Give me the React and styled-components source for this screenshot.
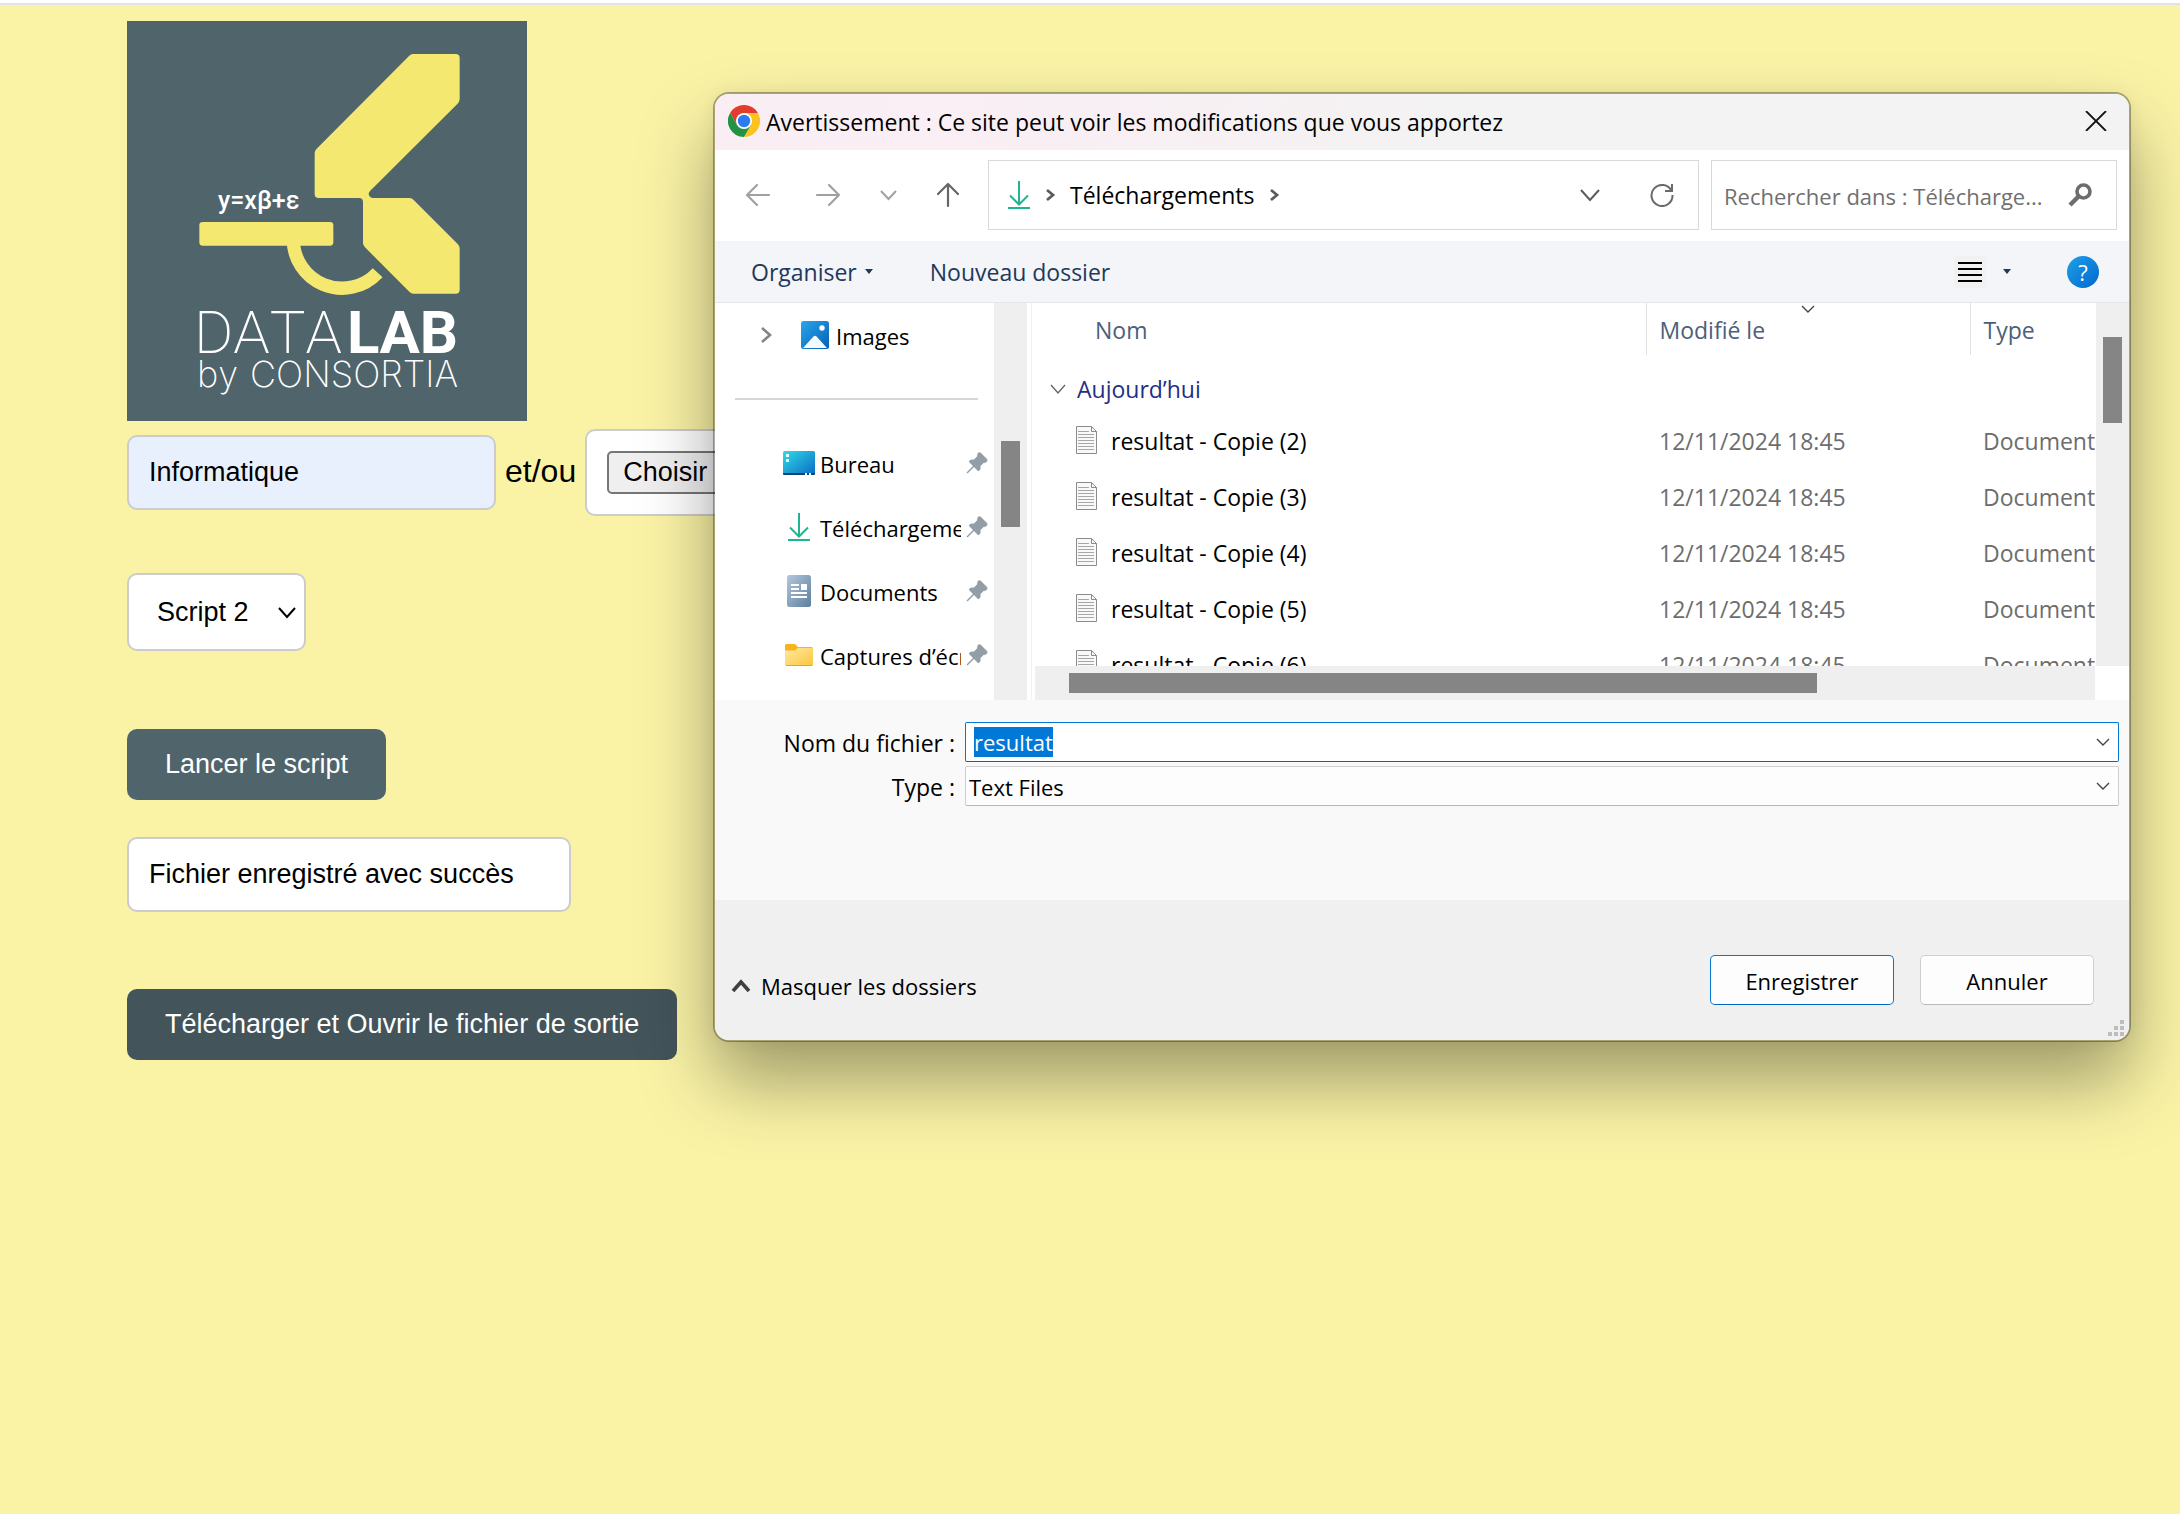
import React, { useEffect, useRef } from "react";
import styled, { createGlobalStyle, css } from "styled-components";

const GlobalStyle = createGlobalStyle`
  *, *::before, *::after { box-sizing: border-box; }
  body {
    margin: 0;
    background: #faf3a6;
    font-family: "Liberation Sans", Arial, sans-serif;
    color: #000;
  }
  button, input, select { font: inherit; color: inherit; margin: 0; }
`;

/* ---------- web page ---------- */

const Page = styled.div`
  position: relative;
  min-height: 100vh;
  border-top: 3px solid #fff;
`;

const PageForm = styled.main`
  display: flex;
  flex-direction: column;
  align-items: flex-start;
  padding: 16px 127px;
  border-top: 2px solid #e2e2e2;
  font-size: 27px;
`;

const Logo = styled.svg`
  display: block;
  width: 400px;
  height: 400px;
  background: #50646c;
`;

const SourceRow = styled.div`
  display: flex;
  align-items: center;
  gap: 9px;
  margin-top: 8px;
`;

const boxed = css`
  border: 2px solid #ccc;
  border-radius: 10px;
  background: #fff;
`;

const TextField = styled.input`
  ${boxed}
  width: ${(p) => p.$width}px;
  height: 75px;
  padding: 0 20px;
  background: ${(p) => (p.$filled ? "#e8f0fe" : "#fff")};
`;

const Joiner = styled.span`
  font-size: 32px;
  line-height: 36px;
  padding-bottom: 4px;
`;

const FileBox = styled.label`
  ${boxed}
  display: flex;
  align-items: center;
  width: 600px;
  height: 87px;
  padding: 0 20px;
`;

const HiddenFile = styled.input`
  width: 0;
  height: 0;
  opacity: 0;
  padding: 0;
  border: 0;
`;

const FileTrigger = styled.span`
  height: 43px;
  padding: 0 14px;
  border: 2px solid #767676;
  border-radius: 5px;
  background: #efefef;
  line-height: 39px;
`;

const ScriptPicker = styled.div`
  ${boxed}
  display: grid;
  align-items: center;
  width: 179px;
  height: 78px;
  margin-top: 57px;
  > * { grid-area: 1 / 1; }
  > svg { justify-self: end; margin-right: 8px; pointer-events: none; }
`;

const ScriptSelect = styled.select`
  appearance: none;
  width: 100%;
  height: 100%;
  padding: 0 28px;
  border: 0;
  background: transparent;
`;

const ActionButton = styled.button`
  height: 71px;
  margin-top: ${(p) => p.$gap}px;
  padding: 0 38px;
  border: 0;
  border-radius: 10px;
  background: ${(p) => (p.$pressed ? "#43545a" : "#50646c")};
  color: #fff;
`;

const Output = styled(TextField)`
  margin-top: 37px;
`;

/* ---------- save dialog ---------- */

const Dialog = styled.section`
  position: absolute;
  top: 89px;
  left: 713px;
  right: 49px;
  border: 2px solid rgba(0, 0, 0, 0.32);
  border-radius: 16px;
  background: #fff;
  background-clip: padding-box;
  box-shadow: 0 40px 72px rgba(0, 0, 0, 0.36), 0 0 16px rgba(0, 0, 0, 0.06);
  font-family: "Open Sans", "Noto Sans", sans-serif;
  font-size: 23px;
  line-height: 30px;
`;

const PlainButton = styled.button`
  display: flex;
  align-items: center;
  justify-content: center;
  padding: 0;
  border: 0;
  background: transparent;
`;

const TitleBar = styled.header`
  display: flex;
  align-items: center;
  gap: 6px;
  height: 56px;
  padding: 0 22px 2px 13px;
  border-radius: 14px 14px 0 0;
  background: linear-gradient(100deg, #faeef4 0%, #f8eff4 25%, #f3f3f3 55%);
`;

const Title = styled.h1`
  flex: 1;
  margin: 0;
  padding-top: 2px;
  font-size: 23px;
  font-weight: 400;
`;

const NavRow = styled.div`
  display: flex;
  align-items: center;
  height: 91px;
  padding: 0 12px 2px 13px;
`;

const NavButtons = styled.nav`
  display: flex;
  gap: 20px;
  margin-right: 20px;
`;

const NavButton = styled(PlainButton)`
  width: ${(p) => (p.$wide ? 60 : 40)}px;
  height: 40px;
  color: ${(p) => (p.$active ? "#666" : "#a0a0a0")};
`;

const fieldBox = css`
  display: flex;
  align-items: center;
  height: 70px;
  border: 1px solid #d9d9d9;
  background: #fff;
`;

const Address = styled.div`
  ${fieldBox}
  flex: 1;
  padding: 0 24px 0 19px;
`;

const Crumbs = styled.div`
  display: flex;
  flex: 1;
  align-items: center;
  gap: 16px;
`;

const AddressTools = styled.div`
  display: flex;
  gap: 50px;
`;

const Search = styled.label`
  ${fieldBox}
  width: 406px;
  margin-left: 12px;
  padding: 0 24px 0 12px;
`;

const SearchInput = styled.input`
  flex: 1;
  min-width: 0;
  padding: 2px 0 0;
  border: 0;
  outline: 0;
  background: transparent;
  font-size: 22px;
  &::placeholder { color: #707070; opacity: 1; }
`;

const CommandBar = styled.div`
  display: flex;
  align-items: center;
  height: 62px;
  padding: 0 30px 0 36px;
  border-bottom: 1px solid #e4e6e9;
  background: #f4f5f8;
`;

const Command = styled(PlainButton)`
  gap: 8px;
  margin-right: 57px;
  color: #1e395b;
`;

const CommandTools = styled.div`
  display: flex;
  align-items: center;
  margin-left: auto;
`;

const ViewButton = styled(PlainButton)`
  gap: 17px;
  margin-right: 56px;
`;

const Help = styled(PlainButton)`
  width: 32px;
  height: 32px;
  border-radius: 50%;
  background: linear-gradient(135deg, #1fa0e6, #0067d0);
  color: #fff;
  font-size: 22px;
  line-height: 32px;
`;

const Body = styled.div`
  display: flex;
  height: 397px;
`;

const Sidebar = styled.div`
  display: flex;
  width: 317px;
  padding-right: 4px;
  border-right: 1px solid #f2f2f2;
`;

const Places = styled.ul`
  flex: 1;
  min-width: 0;
  margin: 0;
  padding: 0 0 0 20px;
  list-style: none;
  font-size: 22px;
`;

const Place = styled.li`
  display: flex;
  align-items: center;
  height: 64px;
  padding: 0 6px 0 ${(p) => (p.$root ? 26 : 48)}px;
`;

const PlaceIcon = styled.span`
  display: flex;
  flex: none;
  justify-content: center;
  width: 32px;
  margin-right: 5px;
`;

const PlaceName = styled.a`
  flex: 1;
  overflow: hidden;
  padding-top: 2px;
  margin-right: 5px;
  color: inherit;
  text-decoration: none;
  white-space: nowrap;
`;

const Expander = styled(PlainButton)`
  width: 10px;
  margin-right: 28px;
`;

const Divider = styled.hr`
  height: 2px;
  margin: 31px 16px 31px 0;
  border: 0;
  background: #d6d6d6;
`;

const VerticalBar = styled.div`
  width: 33px;
  padding: ${(p) => p.$offset}px 7px 0;
  background: #efefef;
  &::before {
    content: "";
    display: block;
    height: 86px;
    background: #858585;
  }
`;

const Files = styled.div`
  display: flex;
  flex: 1;
  flex-direction: column;
  min-width: 0;
`;

const FilesTop = styled.div`
  display: flex;
  height: 363px;
`;

const TableClip = styled.div`
  flex: 1;
  min-width: 0;
  overflow: hidden;
`;

const FileTable = styled.table`
  width: 100%;
  table-layout: fixed;
  border-collapse: collapse;
  white-space: nowrap;
`;

const ColumnHead = styled.th`
  width: ${(p) => p.$width};
  height: 52px;
  padding: 0 0 0 ${(p) => p.$inset}px;
  border-right: ${(p) => (p.$last ? "0" : "1px solid #e2e2e2")};
  color: #4c607a;
  font-weight: 400;
  text-align: left;
  vertical-align: top;
`;

const HeadLabel = styled.div`
  padding-top: ${(p) => (p.$sorted ? 3 : 12)}px;
`;

const SortMark = styled.div`
  display: flex;
  justify-content: center;
  height: 9px;
  padding: 2px 13px 0 0;
`;

const GroupCell = styled.th`
  height: 57px;
  padding: 11px 0 0 18px;
  color: #1f2f87;
  font-weight: 400;
  text-align: left;
`;

const Inline = styled.div`
  display: flex;
  align-items: center;
  gap: ${(p) => p.$gap}px;
`;

const FileCell = styled.td`
  height: 56px;
  padding: ${(p) => (p.$name ? "0 0 0 44px" : "1px 0 0 13px")};
  overflow: hidden;
  color: ${(p) => (p.$name ? "#000" : "#6d6d6d")};
`;

const FileName = styled.span`
  padding-top: 1px;
`;

const HorizontalBar = styled.div`
  height: 34px;
  margin: 0 34px 0 3px;
  padding: 7px 278px 7px 34px;
  background: #efefef;
  &::before {
    content: "";
    display: block;
    height: 20px;
    background: #858585;
  }
`;

const SaveFields = styled.div`
  display: grid;
  grid-template-columns: 240px 1fr;
  grid-auto-rows: 40px;
  gap: 4px 10px;
  height: 200px;
  padding: 22px 10px 0 0;
  background: #f9f9f9;
`;

const FieldLabel = styled.label`
  padding-top: 6px;
  text-align: right;
`;

const Combo = styled.div`
  display: grid;
  align-items: center;
  border: 1px solid ${(p) => (p.$focused ? "#0078d4" : "#cfcfcf")};
  border-bottom-color: ${(p) => (p.$focused ? "#0067c0" : "#b8b8b8")};
  border-radius: 2px;
  background: ${(p) => (p.$focused ? "#fff" : "#fdfdfd")};
  font-size: 22px;
  > * { grid-area: 1 / 1; }
  > svg { justify-self: end; margin-right: 8px; pointer-events: none; }
`;

const comboControl = css`
  width: 100%;
  height: 36px;
  border: 0;
  outline: 0;
  background: transparent;
`;

const NameInput = styled.input`
  ${comboControl}
  padding: 0 30px 0 8px;
  &::selection { background: #0078d7; color: #fff; }
`;

const TypeSelect = styled.select`
  ${comboControl}
  appearance: none;
  padding: 2px 30px 0 3px;
`;

const Footer = styled.footer`
  display: flex;
  flex-direction: column;
  height: 140px;
  padding: 55px 5px 4px 17px;
  border-radius: 0 0 14px 14px;
  background: #f0f0f0;
`;

const FooterRow = styled.div`
  display: flex;
  align-items: center;
  gap: 26px;
  padding-right: 30px;
  font-size: 22px;
`;

const HideFolders = styled(PlainButton)`
  gap: 11px;
  margin-right: auto;
  padding-top: 12px;
`;

const DialogButton = styled.button`
  width: ${(p) => (p.$primary ? 184 : 174)}px;
  height: 50px;
  padding: 2px 0 0;
  border: 1px solid ${(p) => (p.$primary ? "#0078d4" : "#d0d0d0")};
  border-bottom-color: ${(p) => (p.$primary ? "#0067c0" : "#b8b8b8")};
  border-radius: 5px;
  background: #fdfdfd;
`;

const Grip = styled.svg`
  align-self: flex-end;
  margin-top: 15px;
`;

/* ---------- drawings ---------- */

const Chevron = ({ w = 14, h = 8, color = "#444", stroke = 1.4, dir = "down" }) => {
  const d = {
    down: `M1 1 L${w / 2} ${h - 1} L${w - 1} 1`,
    up: `M1 ${h - 1} L${w / 2} 1 L${w - 1} ${h - 1}`,
    right: `M1 1 L${w - 1} ${h / 2} L1 ${h - 1}`,
  }[dir];
  return (
    <svg width={w} height={h} viewBox={`0 0 ${w} ${h}`} fill="none" stroke={color} strokeWidth={stroke} overflow="visible" aria-hidden="true">
      <path d={d} />
    </svg>
  );
};

const Caret = () => (
  <svg width="8" height="5" viewBox="0 0 8 5" aria-hidden="true">
    <path d="M0 0H8L4 5Z" fill="#1e395b" />
  </svg>
);

const Arrow = ({ turn = 0 }) => (
  <svg width="26" height="26" viewBox="0 0 26 26" fill="none" stroke="currentColor" strokeWidth="2.2" strokeLinecap="round" strokeLinejoin="round" aria-hidden="true">
    <g transform={`rotate(${turn} 13 13)`}>
      <path d="M24 13H2M12 3L2 13L12 23" />
    </g>
  </svg>
);

const DownloadMark = () => (
  <svg width="22" height="28" viewBox="0 0 22 28" fill="none" stroke="#1fb592" strokeWidth="2" aria-hidden="true">
    <path d="M11 0V23M2 14.5L11 23.5L20 14.5M0 27H22" />
  </svg>
);

const DatalabLogo = () => (
  <Logo viewBox="0 0 400 400" role="img" aria-label="Datalab by Consortia">
    <g transform="scale(0.33333) translate(-51 -63)" fill="#f4e871">
      <path d="M909 162H1037Q1049 162 1049 174V298Q1049 305 1042 312L780 573Q772 583 780 590Q784 594 790 594H899Q905 594 911 600L1043 732Q1049 738 1049 745V869Q1049 881 1037 881H910Q904 881 898 875L765 742Q759 736 759 730V606Q759 594 747 594H626Q614 594 614 582V460Q614 452 620 446L897 168Q903 162 909 162Z" />
      <rect x="268" y="666" width="402" height="71" rx="10" />
      <path d="M550 725Q550 720 550 715A146 146 0 0 0 803 818" fill="none" stroke="#f4e871" strokeWidth="40" />
    </g>
    <g fill="#fff" fontFamily="Roboto, sans-serif" style={{ fontKerning: "none" }}>
      <text x="91" y="188" fontSize="25" fontWeight="500">y=xβ+ε</text>
      <text x="67" y="332" fontSize="60" fontWeight="200">DATA</text>
      <text x="220" y="332" fontSize="60" fontWeight="700">LAB</text>
      <g fontFamily="Inter, sans-serif" fontSize="36" fontWeight="200">
        <text x="70" y="366">by</text>
        <text x="123" y="366">CONSORTIA</text>
      </g>
    </g>
  </Logo>
);

const ChromeMark = () => (
  <svg width="32" height="32" viewBox="0 0 48 48" aria-hidden="true">
    <path d="M24 12H44.8A24 24 0 0 0 3.2 12L13.6 30Z" fill="#e33b2e" />
    <path d="M34.4 30L24 48A24 24 0 0 0 44.8 12H24Z" fill="#fcc31e" />
    <path d="M13.6 30L3.2 12A24 24 0 0 0 24 48L34.4 30Z" fill="#229342" />
    <circle cx="24" cy="24" r="12" fill="#fff" />
    <circle cx="24" cy="24" r="9.3" fill="#2b7cf0" />
  </svg>
);

const RefreshMark = () => (
  <svg width="24" height="24" viewBox="0 0 24 24" fill="none" stroke="#6a6a6a" strokeWidth="2" aria-hidden="true">
    <path d="M21.5 8A10.5 10.5 0 1 0 22.5 12M22 1V8H15" />
  </svg>
);

const SearchMark = () => (
  <svg width="24" height="24" viewBox="0 0 24 24" fill="none" stroke="#6d6d6d" aria-hidden="true">
    <circle cx="15.5" cy="8.5" r="6.5" strokeWidth="3.6" />
    <path d="M10.5 13.5L2 22" strokeWidth="4.4" />
  </svg>
);

const ListMark = () => (
  <svg width="32" height="32" viewBox="0 0 32 32" aria-hidden="true">
    <rect width="32" height="32" rx="3" fill="#f1f1f1" />
    <path d="M4 7H28M4 13H28M4 19H28M4 25H28" stroke="#000" strokeWidth="2" />
  </svg>
);

const PinMark = () => (
  <svg width="22" height="22" viewBox="0 0 22 22" fill="#929da5" aria-hidden="true">
    <path d="M12.5 0.5Q14 0 15 1L21 7Q22 8 21 9.5Q20 11 17.5 11L14.5 14Q15 17 13.5 18.5Q12.5 19.5 11.5 18.5L8 15L1.5 21.5L0.5 20.5L7 14L3.5 10.5Q2.5 9.5 3.5 8.5Q5 7 8 7.5L11 4.5Q11 1.5 12.5 0.5Z" />
  </svg>
);

const ImagesMark = () => (
  <svg width="28" height="28" viewBox="0 0 28 28" aria-hidden="true">
    <defs>
      <linearGradient id="images" x2="1" y2="1">
        <stop stopColor="#2aa6ec" />
        <stop offset="1" stopColor="#0560b5" />
      </linearGradient>
    </defs>
    <rect width="28" height="28" rx="2.5" fill="url(#images)" />
    <path d="M2 27L12.5 15.5Q14 14 15.5 15.5L26 27Z" fill="#f4f9fe" />
    <circle cx="21" cy="7" r="2.7" fill="#fff" />
  </svg>
);

const DesktopMark = () => (
  <svg width="32" height="24" viewBox="0 0 32 24" aria-hidden="true">
    <defs>
      <linearGradient id="desktop" x2="1" y2="1">
        <stop stopColor="#31dbe4" />
        <stop offset="1" stopColor="#0a6ac6" />
      </linearGradient>
    </defs>
    <rect width="32" height="24" rx="1.5" fill="url(#desktop)" />
    <path d="M0 22H32V22.5Q32 24 30.5 24H1.5Q0 24 0 22.5Z" fill="#0b4570" />
    <path d="M3 3H6V6H3ZM3 8H6V11H3ZM22 22H24V24H22ZM26 22H28V24H26Z" fill="#e9fcff" />
  </svg>
);

const DocumentsMark = () => (
  <svg width="24" height="32" viewBox="0 0 24 32" aria-hidden="true">
    <defs>
      <linearGradient id="documents" x2="1" y2="1">
        <stop stopColor="#b3c7dc" />
        <stop offset="1" stopColor="#5d7f9f" />
      </linearGradient>
    </defs>
    <rect width="24" height="32" rx="2.5" fill="url(#documents)" />
    <path d="M4 9H12V11H4ZM4 13H12V15H4ZM14 9H20V15H14ZM4 17H20V19H4ZM4 21H20V23H4Z" fill="#fff" />
  </svg>
);

const FolderMark = () => (
  <svg width="28" height="22" viewBox="0 0 28 22" aria-hidden="true">
    <defs>
      <linearGradient id="folder" x2="1" y2="1">
        <stop stopColor="#ffe9a2" />
        <stop offset="1" stopColor="#fcc63c" />
      </linearGradient>
    </defs>
    <path d="M0 1.5Q0 0 1.5 0H10L13 3H26.5Q28 3 28 4.5V10H0Z" fill="#f7b51d" />
    <path d="M0 6.5H10L13 4H28V20.5Q28 22 26.5 22H1.5Q0 22 0 20.5Z" fill="url(#folder)" />
    <path d="M1 21.5H27" stroke="#e6a524" />
  </svg>
);

const TextFileMark = () => (
  <svg width="21" height="28" viewBox="0 0 21 28" fill="none" aria-hidden="true">
    <path d="M0.5 0.5H15.5L20.5 5.5V27.5H0.5Z" fill="#f8f9fb" stroke="#8b8b8b" />
    <path d="M15.5 0.5V5.5H20.5" stroke="#8b8b8b" />
    <path d="M2 5.5H13M2 8.5H18M2 11.5H18M2 14.5H18M2 17.5H18M2 20.5H18M2 23.5H18" stroke="#a6a6a6" />
  </svg>
);

/* ---------- data ---------- */

const pinned = [
  { name: "Bureau", Icon: DesktopMark },
  { name: "Téléchargements", Icon: DownloadMark },
  { name: "Documents", Icon: DocumentsMark },
  { name: "Captures d’écran", Icon: FolderMark },
];

const files = [2, 3, 4, 5, 6].map((n) => ({
  name: `resultat - Copie (${n})`,
  modified: "12/11/2024 18:45",
  type: "Document",
}));

function SaveDialog() {
  const nameRef = useRef(null);
  useEffect(() => {
    nameRef.current.focus({ preventScroll: true });
    nameRef.current.select();
  }, []);

  return (
    <Dialog role="dialog" aria-labelledby="dialog-title">
      <TitleBar>
        <ChromeMark />
        <Title id="dialog-title">Avertissement : Ce site peut voir les modifications que vous apportez</Title>
        <PlainButton aria-label="Fermer">
          <svg width="22" height="20" viewBox="0 0 22 20" stroke="#111" strokeWidth="1.8" aria-hidden="true">
            <path d="M1 0L21 20M21 0L1 20" />
          </svg>
        </PlainButton>
      </TitleBar>

      <NavRow>
        <NavButtons>
          <NavButton $wide aria-label="Précédent"><Arrow /></NavButton>
          <NavButton aria-label="Suivant"><Arrow turn={180} /></NavButton>
          <NavButton aria-label="Emplacements récents"><Chevron w={17} h={10} color="currentColor" stroke={2} /></NavButton>
          <NavButton $active aria-label="Dossier parent"><Arrow turn={90} /></NavButton>
        </NavButtons>
        <Address>
          <Crumbs>
            <DownloadMark />
            <Chevron w={8} h={12} dir="right" color="#5c5c5c" stroke={2.8} />
            <PlainButton>Téléchargements</PlainButton>
            <Chevron w={8} h={12} dir="right" color="#5c5c5c" stroke={2.8} />
          </Crumbs>
          <AddressTools>
            <PlainButton aria-label="Historique"><Chevron w={20} h={12} color="#5c5c5c" stroke={2} /></PlainButton>
            <PlainButton aria-label="Actualiser"><RefreshMark /></PlainButton>
          </AddressTools>
        </Address>
        <Search>
          <SearchInput aria-label="Rechercher" placeholder="Rechercher dans : Télécharge..." />
          <SearchMark />
        </Search>
      </NavRow>

      <CommandBar>
        <Command>Organiser <Caret /></Command>
        <Command>Nouveau dossier</Command>
        <CommandTools>
          <ViewButton aria-label="Affichage"><ListMark /><Caret /></ViewButton>
          <Help aria-label="Aide">?</Help>
        </CommandTools>
      </CommandBar>

      <Body>
        <Sidebar>
          <Places>
            <Place $root>
              <Expander aria-label="Développer"><Chevron w={10} h={16} dir="right" color="#858585" stroke={2.6} /></Expander>
              <PlaceIcon><ImagesMark /></PlaceIcon>
              <PlaceName href="#images">Images</PlaceName>
            </Place>
            <li><Divider /></li>
            {pinned.map(({ name, Icon }) => (
              <Place key={name}>
                <PlaceIcon><Icon /></PlaceIcon>
                <PlaceName href="#dossier">{name}</PlaceName>
                <PinMark />
              </Place>
            ))}
          </Places>
          <VerticalBar $offset={138} />
        </Sidebar>

        <Files>
          <FilesTop>
            <TableClip>
              <FileTable>
                <thead>
                  <tr>
                    <ColumnHead $width="614px" $inset={63}><HeadLabel>Nom</HeadLabel></ColumnHead>
                    <ColumnHead $width="324px" $inset={13}>
                      <SortMark><Chevron w={14} h={8} /></SortMark>
                      <HeadLabel $sorted>Modifié le</HeadLabel>
                    </ColumnHead>
                    <ColumnHead $width="auto" $inset={13} $last><HeadLabel>Type</HeadLabel></ColumnHead>
                  </tr>
                </thead>
                <tbody>
                  <tr>
                    <GroupCell colSpan={3}>
                      <Inline $gap={11}><Chevron w={16} h={10} color="#666" />Aujourd’hui</Inline>
                    </GroupCell>
                  </tr>
                  {files.map((f) => (
                    <tr key={f.name}>
                      <FileCell $name>
                        <Inline $gap={14}><TextFileMark /><FileName>{f.name}</FileName></Inline>
                      </FileCell>
                      <FileCell>{f.modified}</FileCell>
                      <FileCell>{f.type}</FileCell>
                    </tr>
                  ))}
                </tbody>
              </FileTable>
            </TableClip>
            <VerticalBar $offset={34} />
          </FilesTop>
          <HorizontalBar />
        </Files>
      </Body>

      <SaveFields>
        <FieldLabel htmlFor="file-name">Nom du fichier :</FieldLabel>
        <Combo $focused>
          <NameInput id="file-name" ref={nameRef} defaultValue="resultat" />
          <Chevron w={14} h={8} />
        </Combo>
        <FieldLabel htmlFor="file-type">Type :</FieldLabel>
        <Combo>
          <TypeSelect id="file-type"><option>Text Files</option></TypeSelect>
          <Chevron w={14} h={8} />
        </Combo>
      </SaveFields>

      <Footer>
        <FooterRow>
          <HideFolders><Chevron w={18} h={11} dir="up" color="#404040" stroke={3.6} />Masquer les dossiers</HideFolders>
          <DialogButton $primary>Enregistrer</DialogButton>
          <DialogButton>Annuler</DialogButton>
        </FooterRow>
        <Grip width="16" height="16" viewBox="0 0 16 16" fill="#bdbdbd" aria-hidden="true">
          <path d="M12 0h4v4h-4zM6 6h4v4H6zM12 6h4v4h-4zM0 12h4v4H0zM6 12h4v4H6zM12 12h4v4h-4z" />
        </Grip>
      </Footer>
    </Dialog>
  );
}

export default function App() {
  return (
    <>
      <GlobalStyle />
      <Page>
        <PageForm>
          <DatalabLogo />
          <SourceRow>
            <TextField $width={369} $filled aria-label="Domaine" defaultValue="Informatique" />
            <Joiner>et/ou</Joiner>
            <FileBox>
              <HiddenFile type="file" />
              <FileTrigger>Choisir un fichier</FileTrigger>
            </FileBox>
          </SourceRow>
          <ScriptPicker>
            <ScriptSelect aria-label="Script"><option>Script 2</option></ScriptSelect>
            <Chevron w={18} h={11} color="#000" stroke={2} />
          </ScriptPicker>
          <ActionButton $gap={78}>Lancer le script</ActionButton>
          <Output $width={444} aria-label="Résultat" readOnly value="Fichier enregistré avec succès" />
          <ActionButton $gap={77} $pressed>Télécharger et Ouvrir le fichier de sortie</ActionButton>
        </PageForm>
        <SaveDialog />
      </Page>
    </>
  );
}
